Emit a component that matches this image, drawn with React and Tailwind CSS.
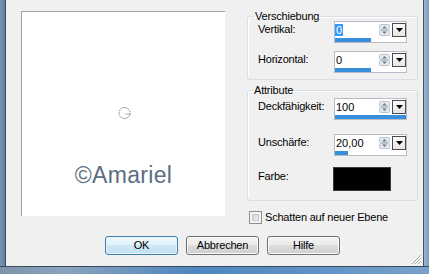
import React from "react";

function SpinArrows() {
  return (
    <svg width="11" height="12" viewBox="0 0 11 12" className="shrink-0">
      <rect x="0.5" y="0.5" width="10" height="5" rx="1" fill="#e4e9ef" stroke="#bcc5cf" />
      <rect x="0.5" y="6.5" width="10" height="5" rx="1" fill="#e4e9ef" stroke="#bcc5cf" />
      <path d="M3 4.5 L5.5 2 L8 4.5 Z" fill="#6f7f90" />
      <path d="M3 7.5 L5.5 10 L8 7.5 Z" fill="#6f7f90" />
    </svg>
  );
}

function DropBtn() {
  return (
    <div className="shrink-0 w-[14px] h-[14px] border border-[#4a4a4a] bg-[linear-gradient(#fafafa,#e6e6e6)] flex items-center justify-center">
      <svg width="7" height="4" viewBox="0 0 7 4">
        <path d="M0 0 L7 0 L3.5 4 Z" fill="#000" />
      </svg>
    </div>
  );
}

function Spin({ value, pct, selected }) {
  return (
    <div className="w-[73px] h-[22px] border border-[#b7bcc4] bg-white flex flex-col">
      <div className="h-[16px] flex items-center">
        <div className="flex-1 text-[11px] leading-[13px] text-black">
          {selected ? (
            <span className="bg-[#3399ff] text-white px-[1px]">{value}</span>
          ) : (
            <span className="pl-[1px]">{value}</span>
          )}
        </div>
        <SpinArrows />
        <div className="w-[2px]" />
        <DropBtn />
      </div>
      <div className="h-[4px] bg-white">
        <div className="h-full bg-[#3a8fdc]" style={{ width: pct + "%" }} />
      </div>
    </div>
  );
}

function Row({ label, children, className = "" }) {
  return (
    <div className={"flex items-start pl-[10px] " + className}>
      <div className="w-[76px] pt-[2px] text-[11px] leading-[13px] tracking-[-0.2px] text-black">{label}</div>
      {children}
    </div>
  );
}

function Btn({ children, primary }) {
  return (
    <div
      className={
        "w-[73px] h-[19px] rounded-[3px] border flex items-center justify-center text-[11px] leading-[13px] tracking-[-0.2px] text-black " +
        (primary
          ? "border-[#3c7fb1] bg-[linear-gradient(#eef7fd,#e2f1fa_50%,#cfe8f5_50%,#bfe0f2)] shadow-[inset_0_0_0_1px_#e6f4fb]"
          : "border-[#707070] bg-[linear-gradient(#f2f2f2,#ebebeb_50%,#dddddd_50%,#cfcfcf)] shadow-[inset_0_0_0_1px_#fbfbfb]")
      }
    >
      {children}
    </div>
  );
}

export default function App() {
  return (
    <div className="w-[429px] h-[274px] flex flex-col overflow-hidden font-['Liberation_Sans',Arial,sans-serif] bg-[#f0f0f0]">
      <div className="flex h-[266px]">
        {/* left frame */}
        <div className="w-[5px] bg-[linear-gradient(90deg,#7a94b3,#647f9f)]" />
        <div className="w-[1px] bg-[#3f4e62]" />

        {/* content */}
        <div className="relative w-[417px] flex flex-col bg-[#f0f0f0]">
          <div className="flex items-start">
            {/* preview */}
            <div className="ml-[15px] mt-[11px] w-[204px] h-[205px] bg-white border-t border-l border-[#a0a0a0] flex flex-col items-center">
              <svg width="14" height="14" viewBox="0 0 14 14" className="mt-[94px] ml-[2px]">
                <circle cx="6.5" cy="7" r="5.5" fill="none" stroke="#6e6e6e" strokeWidth="1" strokeDasharray="1.2 0.9" />
                <path d="M7.5 8 H12.5" stroke="#6e6e6e" strokeWidth="1" strokeDasharray="1 1" />
              </svg>
              <div className="mt-[42px] text-[23px] leading-[27px] text-[#5a6e84] tracking-[0.3px]">©Amariel</div>
            </div>

            {/* right column */}
            <div className="ml-[22px] w-[171px] flex flex-col">
              <fieldset className="mt-[10px] h-[70px] border border-[#d5dfe5] rounded-[3px] shadow-[inset_1px_1px_0_#ffffff]">
                <legend className="ml-[6px] px-[1px] text-[11px] leading-[13px] tracking-[-0.2px] text-black">Verschiebung</legend>
                <Row label="Vertikal:" className="-mt-[2px]">
                  <Spin value="0" pct={50} selected />
                </Row>
                <Row label="Horizontal:" className="mt-[8px]">
                  <Spin value="0" pct={50} />
                </Row>
              </fieldset>

              <fieldset className="mt-[4px] h-[117px] border border-[#d5dfe5] rounded-[3px] shadow-[inset_1px_1px_0_#ffffff]">
                <legend className="ml-[5px] px-[1px] text-[11px] leading-[13px] tracking-[-0.2px] text-black">Attribute</legend>
                <Row label="Deckfähigkeit:" className="mt-[1px]">
                  <Spin value="100" pct={100} />
                </Row>
                <Row label="Unschärfe:" className="mt-[14px]">
                  <Spin value="20,00" pct={19} />
                </Row>
                <div className="flex items-start pl-[10px] mt-[11px]">
                  <div className="w-[75px] pt-[3px] text-[11px] leading-[13px] tracking-[-0.2px] text-black">Farbe:</div>
                  <div className="w-[58px] h-[24px] bg-black border border-[#3a3a3a]" />
                </div>
              </fieldset>

              <div className="mt-[10px] ml-[2px] flex items-center">
                <div className="w-[13px] h-[13px] border border-[#8f8f8f] bg-[#f4f4f4] p-[2px]">
                  <div className="w-full h-full border border-[#c4c8cc] bg-[linear-gradient(135deg,#cfd3d8,#eef0f2)]" />
                </div>
                <div className="ml-[3px] text-[11px] leading-[13px] tracking-[-0.2px] text-black">Schatten auf neuer Ebene</div>
              </div>
            </div>
          </div>

          {/* buttons */}
          <div className="mt-[12px] ml-[99px] flex gap-[8px]">
            <Btn primary>OK</Btn>
            <Btn>Abbrechen</Btn>
            <Btn>Hilfe</Btn>
          </div>

          {/* resize grip */}
          <svg width="11" height="11" viewBox="0 0 11 11" className="absolute right-[1px] bottom-[1px]">
            <path d="M10 1 L1 10 M10 4 L4 10 M10 7 L7 10" stroke="#a8a8a8" strokeWidth="1" />
            <path d="M10.8 1.8 L1.8 10.8 M10.8 4.8 L4.8 10.8 M10.8 7.8 L7.8 10.8" stroke="#ffffff" strokeWidth="0.8" />
          </svg>
        </div>

        {/* right frame */}
        <div className="w-[1px] bg-[#44556b]" />
        <div className="w-[5px] bg-[linear-gradient(90deg,#9cb4cf,#7c9aba)]" />
      </div>
      {/* bottom frame */}
      <div className="h-[1px] bg-[#3c4a5c]" />
      <div className="h-[7px] bg-[linear-gradient(90deg,#7d93ab,#8aa3bd_15%,#4f86bf_45%,#5c90c6_70%,#7aa2c8)]" />
    </div>
  );
}
